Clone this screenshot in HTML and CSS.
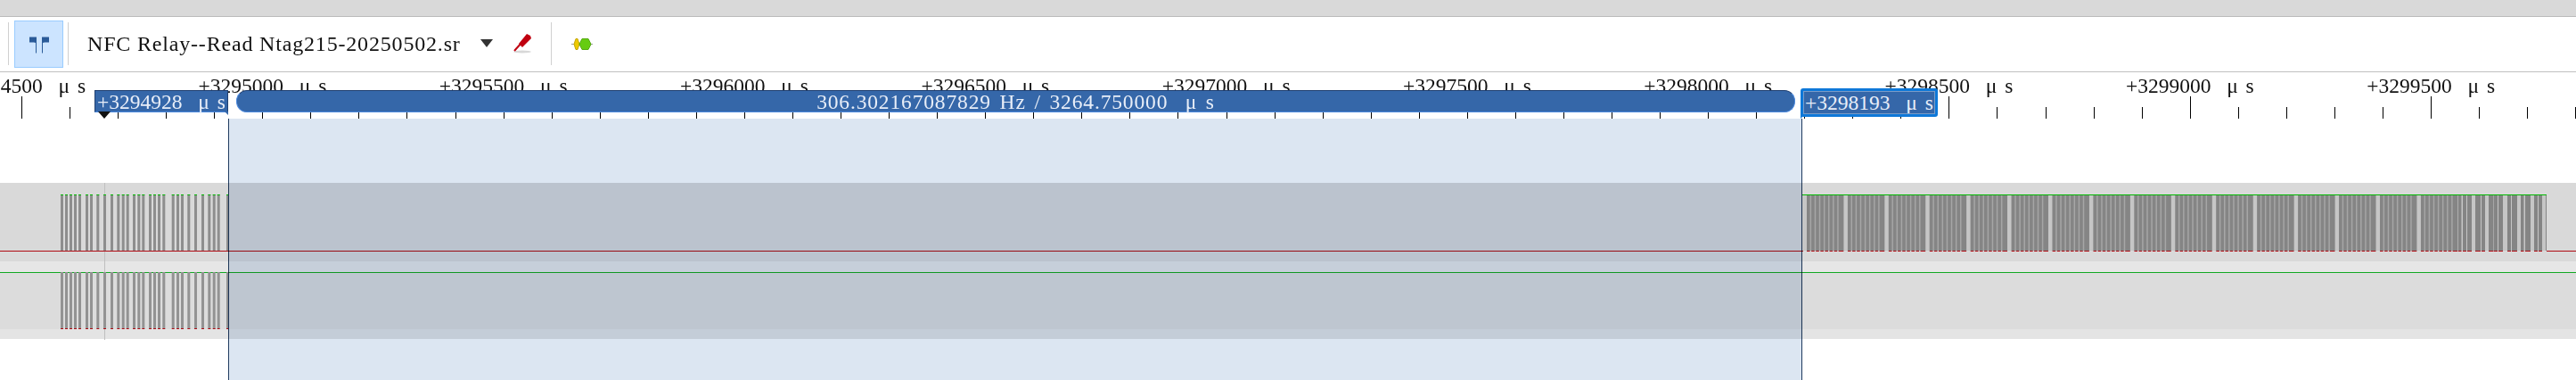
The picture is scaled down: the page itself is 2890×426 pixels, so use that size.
FILE: index.html
```html
<!DOCTYPE html>
<html lang="en">
<head>
    <meta charset="UTF-8">
    <title>PulseView</title>
    <link rel="stylesheet" href="styles.css">
</head>
<body>
    <div class="top-band"></div>
    <div class="toolbar">
        <span class="tool-sep first"></span>
        <button class="tool-btn active">
            <svg width="24" height="22" viewBox="0 0 24 22">
                <path class="icon-cursor" d="M1 3.5H9V21.5H8V10L6 9.5H1z"/>
                <path class="icon-cursor" d="M23 3.5H15V21.5H16V10L18 9.5H23z"/>
            </svg>
        </button>
        <span class="tool-sep second"></span>
        <span class="session-name">NFC Relay--Read Ntag215-20250502.sr</span>
        <span class="drop-arrow"></span>
        <svg class="probe-icon" width="24" height="24" viewBox="0 0 24 24">
            <ellipse class="probe-shadow" cx="12" cy="21" rx="10" ry="1.5"/>
            <path class="probe-wire" d="M3 20L12 10"/>
            <path class="probe-body" d="M8 12l9-11 4 2 1 3-10 10z"/>
        </svg>
        <span class="tool-sep third"></span>
        <svg class="decoder-icon" width="24" height="13" viewBox="0 0 24 13">
            <path class="decoder-lead" d="M0 6.5H24"/>
            <path class="decoder-yellow" d="M5 0.5h2l2 6-2 6h-2l-2-6z"/>
            <path class="decoder-green" d="M12 0.5h7l3 6-3 6h-7l-3-6z"/>
        </svg>
    </div>
    <div class="ruler">
        <div class="time-labels">
            <span class="time-label">+3294500&nbsp;&nbsp;μ s</span>
            <span class="time-label">+3295000&nbsp;&nbsp;μ s</span>
            <span class="time-label">+3295500&nbsp;&nbsp;μ s</span>
            <span class="time-label">+3296000&nbsp;&nbsp;μ s</span>
            <span class="time-label">+3296500&nbsp;&nbsp;μ s</span>
            <span class="time-label">+3297000&nbsp;&nbsp;μ s</span>
            <span class="time-label">+3297500&nbsp;&nbsp;μ s</span>
            <span class="time-label">+3298000&nbsp;&nbsp;μ s</span>
            <span class="time-label">+3298500&nbsp;&nbsp;μ s</span>
            <span class="time-label">+3299000&nbsp;&nbsp;μ s</span>
            <span class="time-label">+3299500&nbsp;&nbsp;μ s</span>
        </div>
        <svg id="ticks" class="ticks" width="2890" height="25"></svg>
    </div>
    <div class="tracks">
        <div class="track-row upper"></div>
        <div class="track-row gap"></div>
        <div class="track-row lower"></div>
        <div class="track-row gap bottom"></div>
        <svg id="wave" class="wave" width="2890" height="177" viewBox="0 205 2890 177"></svg>
    </div>

    <div class="selection"></div>
    <div class="flag flag-left">+3294928&nbsp;&nbsp;μ s</div>
    <div class="marker-arrow"></div>
    <div class="pill">306.302167087829 Hz / 3264.750000&nbsp;&nbsp;μ s</div>
    <div class="flag flag-right">+3298193&nbsp;&nbsp;μ s</div>

    <script src="app.js"></script>
</body>
</html>
```

FILE: styles.css
```css
html, body {
    margin: 0;
    padding: 0;
    width: 2890px;
    height: 426px;
    overflow: hidden;
    background: #fff;
    font-family: "Liberation Serif", serif;
}
.top-band {
    height: 18px;
    background: #d9d9d9;
    border-bottom: 1px solid #bbb;
}
.toolbar {
    display: flex;
    align-items: center;
    height: 60px;
    border-bottom: 1px solid #c0c0c0;
    padding-bottom: 1px;
}
.tool-sep {
    width: 1px;
    height: 48px;
    background: #d0d0d0;
}
.tool-sep.first {
    margin-left: 9px;
}
.tool-btn {
    display: flex;
    align-items: center;
    justify-content: center;
    box-sizing: border-box;
    width: 55px;
    height: 53px;
    margin: 0 0 0 6px;
    padding: 0;
    border: 1px solid #99ccff;
    background: #cce4ff;
}
.tool-sep.second {
    margin-left: 5px;
}
.icon-cursor {
    fill: #2a5a98;
}
.session-name {
    margin-left: 21px;
    width: 421px;
    font-size: 24px;
    letter-spacing: 0.82px;
    white-space: nowrap;
    color: #111;
}
.drop-arrow {
    width: 0;
    height: 0;
    margin-left: 20px;
    margin-bottom: 2px;
    border-left: 7px solid transparent;
    border-right: 7px solid transparent;
    border-top: 9px solid #333;
}
.probe-icon {
    margin-left: 21px;
    margin-bottom: 1px;
}
.probe-shadow {
    fill: #d8d8d8;
}
.probe-wire {
    stroke: #c00010;
    stroke-width: 2;
    fill: none;
}
.probe-body {
    fill: #c00010;
}
.tool-sep.third {
    margin-left: 20px;
}
.decoder-icon {
    margin-left: 22px;
}
.decoder-lead {
    stroke: #999;
    stroke-width: 1;
}
.decoder-yellow {
    fill: #eec900;
    stroke: #c4a400;
}
.decoder-green {
    fill: #66cc11;
    stroke: #55aa11;
}

.ruler {
    height: 52px;
    overflow: hidden;
}
.time-labels {
    display: flex;
    height: 27px;
    margin-left: -111px;
    font-size: 23.5px;
    line-height: 30px;
    color: #111;
}
.time-label {
    flex: 0 0 270.3px;
    text-align: center;
    white-space: nowrap;
    word-spacing: 3px;
}
.ticks {
    display: block;
}
.tick-line {
    stroke: #000;
    stroke-width: 1;
    fill: none;
}

.tracks {
    position: relative;
    margin-top: 72px;
}
.track-row.upper {
    height: 88px;
    background: #d9d9d9;
}
.track-row.gap {
    height: 12px;
    background: #e6e6e6;
}
.track-row.lower {
    height: 64px;
    background: #dcdcdc;
}
.track-row.gap.bottom {
    height: 11px;
    background: #e4e4e4;
}
.wave {
    position: absolute;
    left: 0;
    top: 0;
}
.cursor-line {
    fill: #bfbfbf;
}
.base-fill {
    fill: #c6c6c6;
}
.bar-mid {
    fill: #a6a6a6;
}
.bar {
    fill: #858585;
}
.bar-left {
    fill: #8e8e8e;
}
.bar-low {
    fill: #939393;
}
.hi {
    fill: #00b800;
}
.lo {
    fill: #b00c14;
}
.line-green {
    fill: #12a822;
}

.selection {
    position: absolute;
    left: 256px;
    top: 133px;
    bottom: 0;
    width: 1764px;
    background: #dce6f2;
    border-left: 1px solid #1f3a5f;
    border-right: 1px solid #1f3a5f;
    mix-blend-mode: multiply;
}
.flag, .pill {
    position: absolute;
    box-sizing: border-box;
    color: #e8eef8;
    background: #3567a9;
    font-size: 23.5px;
    line-height: 25px;
    white-space: nowrap;
    word-spacing: 3px;
}
.flag-left {
    left: 106px;
    top: 101px;
    width: 150px;
    height: 25px;
    padding-left: 2px;
    border: 1px solid #1f3f70;
    border-bottom-color: #4a88dd;
}
.flag-left::after {
    content: "";
    position: absolute;
    right: -1px;
    bottom: -4px;
    border-top: 4px solid #3567a9;
    border-left: 4px solid transparent;
}
.marker-arrow {
    position: absolute;
    left: 110px;
    top: 125px;
    border-left: 7px solid transparent;
    border-right: 7px solid transparent;
    border-top: 8px solid #111;
}
.pill {
    left: 265px;
    top: 101px;
    width: 1749px;
    height: 25px;
    text-align: center;
    letter-spacing: 0.85px;
    border: 1px solid #4a88dd;
    border-top-color: #1f3f70;
    border-radius: 12px;
}
.flag-right {
    left: 2020px;
    top: 99px;
    width: 154px;
    height: 32px;
    padding-left: 2px;
    border: 3px solid #0e78d8;
    border-radius: 3px;
    line-height: 27px;
    outline: 1px solid #7a9cc8;
    outline-offset: -4px;
}
.flag-right::after {
    content: "";
    position: absolute;
    left: -3px;
    bottom: -5px;
    border-top: 5px solid #0e78d8;
    border-right: 5px solid transparent;
}
```

FILE: app.js
```js
// ruler ticks, one every 100 us
const TICK_START = 24;
const TICK_STEP = 54.06;
let tickPath = '';
for (let i = 0; i < 54; i++) {
    const x = Math.round(TICK_START + i * TICK_STEP) + 0.5;
    tickPath += 'M' + x + ' ' + (i % 5 === 0 ? 0 : 12) + 'V25';
}
document.getElementById('ticks').innerHTML = '<path class="tick-line" d="' + tickPath + '"/>';

// captured pulses left of the selection, read off the trace
const leftPulses = [68, 73, 78, 83, 88, 96, 101, 108.3, 116, 124, 131.3, 136.7, 141.7, 149, 154.3, 159.3,
    167, 172, 177, 182.3, 192.7, 198, 203, 210.3, 218, 226, 233.3, 238.7, 243.7, 254];

// sparse pulses at the end of the burst: [start, width]
const tailPulses = [[2758, 3.5], [2763, 4], [2768, 5], [2777, 6], [2784, 4], [2792, 5.5], [2798, 4],
    [2803, 5], [2813, 4], [2818, 6], [2828, 3.5], [2833, 6], [2843, 4], [2848, 4]];

function rect(cls, x, y, w, h) {
    return '<rect class="' + cls + '" x="' + x + '" y="' + y + '" width="' + w + '" height="' + h + '"/>';
}

let svg = rect('cursor-line', 117, 205, 1, 176);

// channel baselines
svg += rect('lo', 0, 281, 2023, 1);
svg += rect('lo', 2857, 281, 33, 1);
svg += rect('line-green', 0, 305, 2890, 1);

// upper and lower trace before the selection
leftPulses.forEach(function(x) {
    const w = x === 254 ? 2 : 3;
    svg += rect('bar-left', x, 218, w, 63);
    svg += rect('hi', x, 218, w, 1);
    svg += rect('bar-low', x, 305, w, 63);
    svg += rect('lo', x, 368, w, 1);
});

// dense burst after the selection
svg += rect('base-fill', 2022, 218, 835, 63);
svg += rect('hi', 2022, 218, 835, 1);
const CLUSTER = 45.93;
for (let c = 0; c < 16; c++) {
    const start = 2027 + c * CLUSTER;
    svg += rect('bar-mid', start, 219, 41.3, 62);
    for (let b = 0; b < 8; b++) {
        const x = start + b * 5.1;
        const w = b === 7 ? 5.6 : 3.6;
        svg += rect('bar', x, 219, w, 62);
        svg += rect('lo', x, 281, w, 1);
    }
}
tailPulses.forEach(function(p) {
    svg += rect('bar', p[0], 219, p[1], 62);
    svg += rect('lo', p[0], 281, p[1], 1);
});
svg += rect('bar', 2856, 219, 1, 62);

document.getElementById('wave').innerHTML = svg;
```
